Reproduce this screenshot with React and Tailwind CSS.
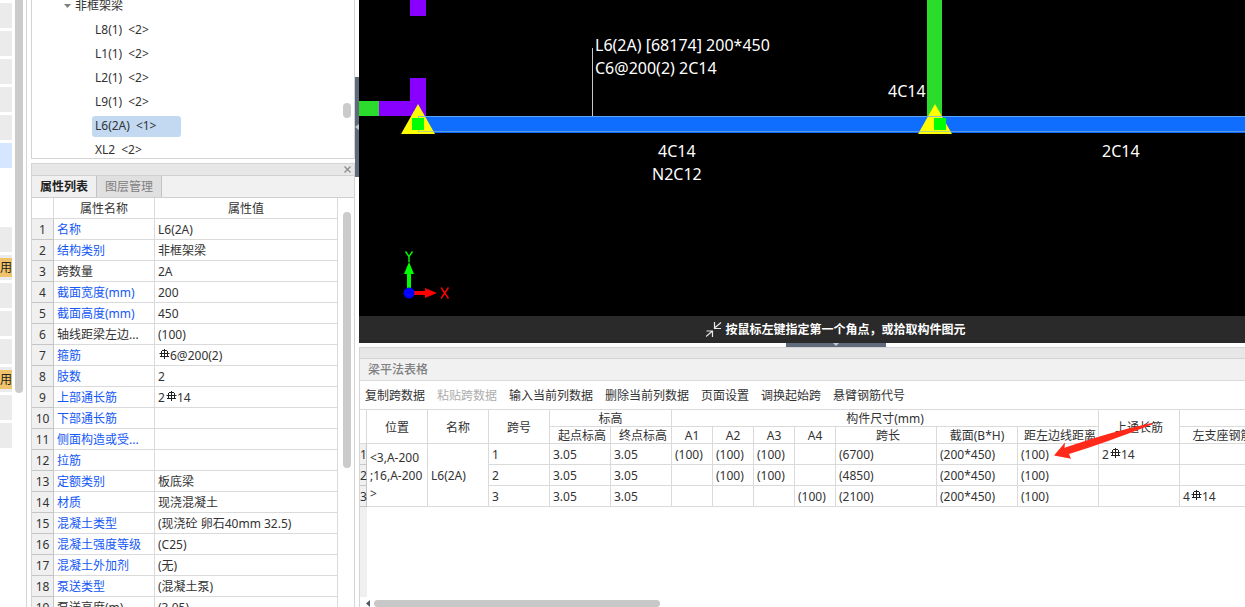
import React from 'react';

const UI_FONT = "font-['Noto_Sans','Noto_Sans_CJK_SC',sans-serif]";

const sideItems = [
  'gray', 'gray', 'gray', 'gray', 'gray', 'blue', 'blank', 'blank',
  'gray', 'badge', 'gray', 'gray', 'gray', 'badge', 'gray', 'gray',
];

const treeItems = [
  { name: 'L8(1)', count: '<2>' },
  { name: 'L1(1)', count: '<2>' },
  { name: 'L2(1)', count: '<2>' },
  { name: 'L9(1)', count: '<2>' },
  { name: 'L6(2A)', count: '<1>', selected: true },
  { name: 'XL2', count: '<2>' },
];

const properties = [
  ['名称', 'L6(2A)'],
  ['结构类别', '非框架梁'],
  ['跨数量', '2A', true],
  ['截面宽度(mm)', '200'],
  ['截面高度(mm)', '450'],
  ['轴线距梁左边...', '(100)', true],
  ['箍筋', '#6@200(2)'],
  ['肢数', '2'],
  ['上部通长筋', '2#14'],
  ['下部通长筋', ''],
  ['侧面构造或受...', ''],
  ['拉筋', ''],
  ['定额类别', '板底梁'],
  ['材质', '现浇混凝土'],
  ['混凝土类型', '(现浇砼 卵石40mm 32.5)'],
  ['混凝土强度等级', '(C25)'],
  ['混凝土外加剂', '(无)'],
  ['泵送类型', '(混凝土泵)'],
  ['泵送高度(m)', '(3.05)', true],
];

const toolbar = [
  { label: '复制跨数据' },
  { label: '粘贴跨数据', disabled: true },
  { label: '输入当前列数据' },
  { label: '删除当前列数据' },
  { label: '页面设置' },
  { label: '调换起始跨' },
  { label: '悬臂钢筋代号' },
];

const spans = [
  ['1', '3.05', '3.05', '(100)', '(100)', '(100)', '', '(6700)', '(200*450)', '(100)', '2#14', ''],
  ['2', '3.05', '3.05', '', '(100)', '(100)', '', '(4850)', '(200*450)', '(100)', '', ''],
  ['3', '3.05', '3.05', '', '', '', '(100)', '(2100)', '(200*450)', '(100)', '', '4#14'],
];

function Rebar() {
  return (
    <svg className="inline-block h-[11px] w-3 align-[0px]" viewBox="0 0 12 11" fill="none" stroke="#222" strokeWidth="1" aria-hidden="true">
      <path d="M6.5 0V10M4 1.5H9M3.5 2V7.500M9.500 2V7.500M1.500 4.500H11.500M2 7.500H11" />
    </svg>
  );
}

// '#' stands for the rebar grade symbol
function Value({ text }) {
  const parts = text.split('#');
  if (parts.length === 1) return text;
  return (
    <>
      {parts[0]}
      <Rebar />
      {parts[1]}
    </>
  );
}

function SideStrip() {
  return (
    <div className="flex w-[27px] shrink-0 justify-between border-r border-[#d6d6d6]">
      <div className="flex w-3 flex-col gap-[3px] pt-[3px]">
        {sideItems.map((kind, i) => {
          if (kind === 'badge') {
            return (
              <div key={i} className="flex h-[25px] shrink-0 items-center bg-[#ebebeb]">
                <button type="button" className="h-[19px] w-3 overflow-hidden bg-[#efc36c] text-[#222]">用</button>
              </div>
            );
          }
          const tone = kind === 'gray' ? 'bg-[#ebebeb]' : kind === 'blue' ? 'bg-[#d4e7ff]' : 'bg-white';
          return <div key={i} className={`h-[25px] shrink-0 ${tone}`} />;
        })}
      </div>
      <div className="mr-[3px] h-[393px] w-2 rounded-b bg-[#cbcbcb]" />
    </div>
  );
}

function ComponentTree() {
  return (
    <div className="flex h-[159px] shrink-0 justify-between overflow-hidden border-x border-b border-[#d4d4d4]">
      <ul className="-mt-1.5 pl-8">
        <li className="flex h-6 items-center gap-1">
          <svg className="h-1 w-[7px]" viewBox="0 0 7 4" aria-hidden="true">
            <path d="M0 0H7L3.5 4Z" fill="#808080" />
          </svg>
          <span>非框架梁</span>
        </li>
        {treeItems.map((item) => (
          <li key={item.name} className="flex h-6 items-center pl-7">
            <button
              type="button"
              className={`flex h-[21px] w-[89px] items-center gap-1.5 rounded-[3px] pl-[3px] ${item.selected ? 'bg-[#c2d9f1]' : ''}`}
            >
              <span>{item.name}</span>
              <span>{item.count}</span>
            </button>
          </li>
        ))}
      </ul>
      <div className="mt-[103px] mr-[3px] h-[15px] w-2 rounded-full bg-[#cbcbcb]" />
    </div>
  );
}

function PropertyPanel() {
  return (
    <section className="mt-1 flex min-h-0 flex-1 flex-col overflow-hidden border-x border-t border-[#d4d4d4]">
      <div className="flex h-[11px] shrink-0 items-center justify-end bg-[#e7e7e7] pr-[3px]">
        <button type="button" aria-label="关闭">
          <svg className="h-[7px] w-[7px]" viewBox="0 0 7 7" stroke="#8a8a8a" strokeWidth="1.2">
            <path d="M0.5 0.5L6.5 6.5M6.5 0.5L0.5 6.5" />
          </svg>
        </button>
      </div>
      <div className="flex h-[23px] shrink-0 border-y border-[#d0d0d0] bg-[#f1f1f1]">
        <button type="button" className="w-[65px] border-r border-[#c0c3c8] bg-[#f0f0f0] font-bold text-[#222]">属性列表</button>
        <button type="button" className="w-[65px] border-r border-[#c0c3c8] bg-[#e0e0e0] text-[#808080]">图层管理</button>
      </div>
      <div className="flex min-h-0 flex-1 justify-between overflow-hidden">
        <table className="w-[306px] shrink-0 table-fixed border-separate border-spacing-0 self-start leading-[18px]">
          <colgroup>
            <col className="w-[22px]" />
            <col className="w-[101px]" />
            <col className="w-[183px]" />
          </colgroup>
          <thead>
            <tr>
              <th className="h-[21px] border-r border-b border-[#dadada] p-0" />
              <th className="border-r border-b border-[#dadada] px-0 pt-0.5 pb-0 font-normal">属性名称</th>
              <th className="border-r border-b border-[#dadada] px-0 pt-0.5 pb-0 font-normal">属性值</th>
            </tr>
          </thead>
          <tbody>
            {properties.map(([name, value, plain], i) => (
              <tr key={name}>
                <td className="h-[21px] border-r border-b border-[#c6c6c6] bg-[#f0f0f0] px-0 pt-0.5 pb-0 text-center">{i + 1}</td>
                <td className={`overflow-hidden border-r border-b border-[#dadada] pt-0.5 pr-0 pb-0 pl-[3px] whitespace-nowrap ${plain ? '' : 'text-[#1458f5]'}`}>
                  {name}
                </td>
                <td className="overflow-hidden border-r border-b border-[#dadada] pt-0.5 pr-0 pb-0 pl-[3px] whitespace-nowrap">
                  <Value text={value} />
                </td>
              </tr>
            ))}
          </tbody>
        </table>
        <div className="mt-3.5 mr-[3px] h-64 w-2 rounded-full bg-[#cbcbcb]" />
      </div>
    </section>
  );
}

function Support({ x, square }) {
  return (
    <g>
      <path d={`M${x} 104L${x + 17} 134H${x - 17}Z`} fill="#ffff00" />
      <rect x={square} y="118" width="12" height="12" fill="#00ff00" />
    </g>
  );
}

function Drawing() {
  return (
    <div className="relative min-h-0 flex-1 overflow-hidden bg-black text-base leading-[23px] whitespace-nowrap text-white">
      <svg className="absolute inset-0 h-full w-full" aria-hidden="true">
        <rect x="51" y="0" width="16" height="16" fill="#8800ff" />
        <rect x="51" y="78" width="16" height="38" fill="#8800ff" />
        <rect x="20" y="101" width="47" height="15" fill="#8800ff" />
        <rect x="0" y="101" width="20" height="15" fill="#2cdc2c" />
        <rect x="568" y="0" width="15" height="116" fill="#2cdc2c" />
        <rect x="59" y="116" width="100%" height="17" fill="#106eff" />
        <Support x={59} square={53} />
        <Support x={576} square={575} />
        <path d="M59.5 116V132" stroke="#9db98a" strokeOpacity="0.6" />
        <rect x="59" y="116" width="100%" height="1" fill="#6fb0f5" fillOpacity="0.8" />
        <rect x="59" y="131" width="100%" height="1" fill="#8fb5d0" fillOpacity="0.6" />
        <rect x="53" y="118" width="12" height="12" fill="#00ff00" />
        <rect x="233" y="48" width="1" height="68" fill="#c8c8c8" />
        <path d="M50 262L55 274H52V288H48V274H45Z" fill="#00ff00" />
        <path d="M55 291H66V288L78 293L66 298V295H55Z" fill="#ff0000" />
        <circle cx="50" cy="293" r="5.5" fill="#0000ff" />
        <path d="M46.5 251.5L50 256.5V262M53.5 251.5L50 256.5" fill="none" stroke="#00ff00" strokeWidth="1.4" />
        <path d="M82 287.5L89.5 298.500M89.5 287.5L82 298.500" fill="none" stroke="#ff0000" strokeWidth="1.4" />
      </svg>
      <div className="absolute top-[34px] left-[236px]">
        <p>L6(2A) [68174] 200*450</p>
        <p>C6@200(2) 2C14</p>
      </div>
      <span className="absolute top-20 left-[529px]">4C14</span>
      <div className="absolute top-[140px] left-[293px] text-center">
        <p>4C14</p>
        <p>N2C12</p>
      </div>
      <span className="absolute top-[140px] left-[743px]">2C14</span>
    </div>
  );
}

const thBase = 'border-r border-b border-[#dadada] pt-0.5 pr-0 pb-0 font-normal whitespace-nowrap';
const th = `${thBase} pl-0`;
const thSub = `${thBase} pl-1`;

function SpanTable() {
  return (
    <table className="w-[902px] table-fixed border-separate border-spacing-0 border-t border-[#dadada]">
      <colgroup>
        <col className="w-[7px]" />
        <col className="w-[61px]" />
        <col className="w-[61px]" />
        <col className="w-[61px]" />
        <col className="w-[61px]" />
        <col className="w-[61px]" />
        <col className="w-[41px]" />
        <col className="w-[41px]" />
        <col className="w-[41px]" />
        <col className="w-[41px]" />
        <col className="w-[101px]" />
        <col className="w-[81px]" />
        <col className="w-[81px]" />
        <col className="w-[81px]" />
        <col className="w-[82px]" />
      </colgroup>
      <thead className="leading-[14px]">
        <tr>
          <th rowSpan={2} className={th} />
          <th rowSpan={2} className={th}>位置</th>
          <th rowSpan={2} className={th}>名称</th>
          <th rowSpan={2} className={th}>跨号</th>
          <th colSpan={2} className={`h-[17px] ${th}`}>标高</th>
          <th colSpan={7} className={th}>构件尺寸(mm)</th>
          <th rowSpan={2} className={th}>上通长筋</th>
          <th className={th} />
        </tr>
        <tr>
          <th className={`h-[17px] ${thSub}`}>起点标高</th>
          <th className={thSub}>终点标高</th>
          <th className={th}>A1</th>
          <th className={th}>A2</th>
          <th className={th}>A3</th>
          <th className={th}>A4</th>
          <th className={thSub}>跨长</th>
          <th className={th}>截面(B*H)</th>
          <th className={thSub}>距左边线距离</th>
          <th className={thSub}>左支座钢筋</th>
        </tr>
      </thead>
      <tbody className="leading-[18px]">
        {spans.map((row, r) => (
          <tr key={row[0]}>
            <td className="h-[21px] border-r border-b border-[#c6c6c6] bg-[#f0f0f0] px-0 pt-0.5 pb-0">{r + 1}</td>
            {r === 0 && (
              <>
                <td rowSpan={3} className="border-r border-b border-[#dadada] pt-0.5 pr-0 pb-0 pl-[3px] leading-[18px] whitespace-nowrap">
                  {'<3,A-200'}<br />{';16,A-200'}<br />{'>'}
                </td>
                <td rowSpan={3} className="border-r border-b border-[#dadada] pt-0.5 pr-0 pb-0 pl-[3px]">L6(2A)</td>
              </>
            )}
            {row.map((cell, c) => (
              <td key={c} className="border-r border-b border-[#dadada] pt-0.5 pr-0 pb-0 pl-[3px] whitespace-nowrap">
                <Value text={cell} />
              </td>
            ))}
          </tr>
        ))}
      </tbody>
    </table>
  );
}

function SpanPanel() {
  return (
    <section className="relative flex h-[260px] shrink-0 flex-col overflow-hidden border-t border-l border-[#d4d4d4]">
      <div className="h-[11px] shrink-0 border-b border-[#d4d4d4] bg-[#e7e7e7]" />
      <h2 className="h-[22px] shrink-0 border-b border-[#dadada] bg-[#f1f1f1] pl-2 leading-[21px] font-medium text-[#808080]">梁平法表格</h2>
      <div className="flex h-7 shrink-0 items-center gap-3 pt-0.5 pl-[5px] whitespace-nowrap">
        {toolbar.map((item) => (
          <button key={item.label} type="button" disabled={item.disabled} className="disabled:text-[#adadad]">
            {item.label}
          </button>
        ))}
      </div>
      <div className="flex min-h-0 flex-1 flex-col overflow-hidden">
        <SpanTable />
        <div className="w-[7px] flex-1 bg-[#f0f0f0]" />
      </div>
      <div className="flex h-2.5 shrink-0 items-center gap-1 pt-[3px] pl-1.5">
        <svg className="h-[7px] w-1" viewBox="0 0 4 7" aria-hidden="true">
          <path d="M4 0V7L0 3.5Z" fill="#4d5866" />
        </svg>
        <div className="h-[7px] w-[286px] rounded-full bg-[#c8c8c8]" />
      </div>
      <svg className="pointer-events-none absolute top-[74px] left-[694px] h-10 w-[102px]" viewBox="1054 422 102 40" aria-hidden="true">
        <path d="M1054 455.500L1065 442.500L1064.500 447.700Q1110 432 1152.500 422.700L1152 424.500Q1105 443 1069 454L1071 458.700Z" fill="#ff2a1a" />
      </svg>
    </section>
  );
}

export default function App() {
  return (
    <div className={`flex h-screen overflow-hidden bg-white text-xs text-[#333] ${UI_FONT}`}>
      <SideStrip />
      <aside className="ml-1 flex w-[324px] shrink-0 flex-col">
        <ComponentTree />
        <PropertyPanel />
      </aside>
      <div className="w-1 shrink-0 pt-[77px]">
        <button type="button" aria-label="收起左侧面板" className="flex h-[100px] w-1 items-center bg-[#5f6b7a]">
          <svg className="h-1.5 w-1" viewBox="0 0 4 6" aria-hidden="true">
            <path d="M4 0V6L0 3Z" fill="#c5cad0" />
          </svg>
        </button>
      </div>
      <main className="flex min-w-0 flex-1 flex-col">
        <Drawing />
        <div className="flex h-[27px] shrink-0 items-center justify-center gap-0.5 bg-[#2a2a2a] pl-[68px] font-bold text-white">
          <svg className="h-4 w-[17px] shrink-0" viewBox="0 0 17 16" fill="none" stroke="#e8e8e8" strokeWidth="1.2" aria-hidden="true">
            <path d="M15 0.500L8.500 6M8.500 0V6.500H15M0 14.500L6.500 9M0.500 9H6.500V15" />
          </svg>
          <span>按鼠标左键指定第一个角点，或拾取构件图元</span>
        </div>
        <div className="flex h-1 shrink-0 justify-center pl-[68px]">
          <button type="button" aria-label="收起下方面板" className="flex h-1 w-[100px] justify-center bg-[#5f6b7a]">
            <svg className="h-[3px] w-1.5" viewBox="0 0 6 3" aria-hidden="true">
              <path d="M0 0H6L3 3Z" fill="#c5cad0" />
            </svg>
          </button>
        </div>
        <SpanPanel />
      </main>
    </div>
  );
}
